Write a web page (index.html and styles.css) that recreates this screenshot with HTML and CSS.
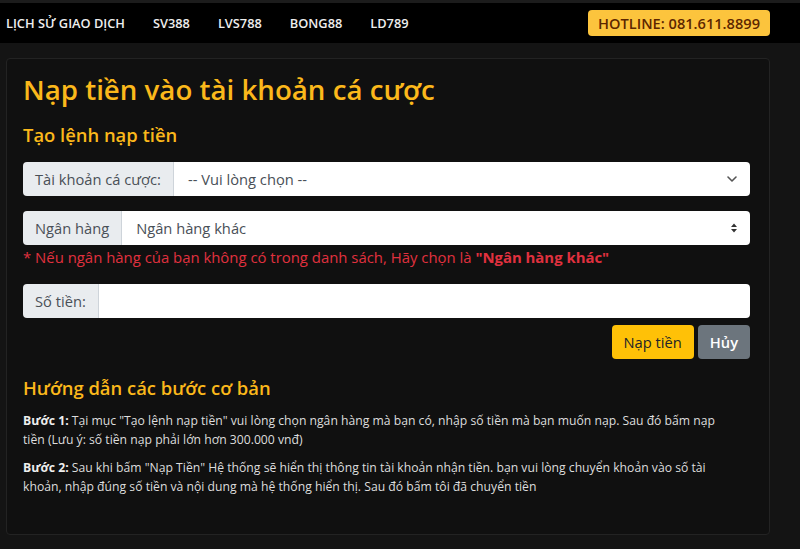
FILE: index.html
```html
<!DOCTYPE html>
<html lang="vi">
<head>
  <meta charset="UTF-8">
  <meta name="viewport" content="width=device-width, initial-scale=1.0">
  <title>Nạp tiền vào tài khoản cá cược</title>
  <link rel="stylesheet" href="styles.css">
</head>
<body>
  <nav class="topbar">
    <ul class="menu">
      <li>LỊCH SỬ GIAO DỊCH</li>
      <li>SV388</li>
      <li>LVS788</li>
      <li>BONG88</li>
      <li>LD789</li>
    </ul>
    <span class="hotline">HOTLINE: 081.611.8899</span>
  </nav>

  <main class="page">
    <section class="card">
      <h1>Nạp tiền vào tài khoản cá cược</h1>
      <h2>Tạo lệnh nạp tiền</h2>

      <div class="input-group">
        <span class="addon">Tài khoản cá cược:</span>
        <div class="field select">
          <span>-- Vui lòng chọn --</span>
          <svg width="12" height="8" viewBox="0 0 12 8"><path d="M2 2l4 4 4-4" fill="none" stroke="#555" stroke-width="1.6" stroke-linecap="round" stroke-linejoin="round"/></svg>
        </div>
      </div>

      <div class="input-group tight">
        <span class="addon">Ngân hàng</span>
        <div class="field select">
          <span>Ngân hàng khác</span>
          <svg width="8" height="12" viewBox="0 0 8 12"><path d="M4 1.5L7 5H1z M4 10.5L1 7h6z" fill="#333"/></svg>
        </div>
      </div>
      <p class="note">* Nếu ngân hàng của bạn không có trong danh sách, Hãy chọn là <strong>"Ngân hàng khác"</strong></p>

      <div class="input-group tight">
        <span class="addon">Số tiền:</span>
        <div class="field"></div>
      </div>
      <div class="actions">
        <button class="btn btn-warning">Nạp tiền</button>
        <button class="btn btn-secondary">Hủy</button>
      </div>

      <h2 class="guide-title">Hướng dẫn các bước cơ bản</h2>
      <p class="step"><b>Bước 1:</b> Tại mục "Tạo lệnh nạp tiền" vui lòng chọn ngân hàng mà bạn có, nhập số tiền mà bạn muốn nạp. Sau đó bấm nạp tiền (Lưu ý: số tiền nạp phải lớn hơn 300.000 vnđ)</p>
      <p class="step"><b>Bước 2:</b> Sau khi bấm "Nạp Tiền" Hệ thống sẽ hiển thị thông tin tài khoản nhận tiền. bạn vui lòng chuyển khoản vào số tài khoản, nhập đúng số tiền và nội dung mà hệ thống hiển thị. Sau đó bấm tôi đã chuyển tiền</p>
    </section>
  </main>
</body>
</html>
```

FILE: styles.css
```css
body { margin: 0; background-color: #141414; color: #ddd; font-family: "Open Sans", Arial, sans-serif; }

.topbar { display: flex; align-items: center; justify-content: space-between; height: 40px; background-color: #000; border-top: 3px solid #1c1c1c; padding: 0 30px 0 6px; }
.menu { display: flex; gap: 28px; margin: 0; padding: 0; list-style: none; }
.menu li { color: #eee; font-size: 12.8px; font-weight: 600; }
.hotline { background-color: #fcc43d; color: #5c2600; font-size: 14.6px; font-weight: 600; padding: 3px 10px; border-radius: 4px; line-height: 20px; }

.page { padding: 15px 30px 15px 6px; }
.card { background-color: #101010; border: 1px solid #232323; border-radius: 4px; padding: 12px 19px 29px 16px; }

h1 { color: #fbb81b; font-size: 27.7px; font-weight: 600; margin: 0 0 16px; line-height: 1.3; }
h2 { color: #fbb81b; font-size: 18.4px; font-weight: 600; margin: 0 0 15px; line-height: 1.3; }

.input-group { display: flex; height: 34px; border-radius: 4px; overflow: hidden; margin-bottom: 15px; }
.input-group.tight { margin-bottom: 2px; }
.addon { display: flex; align-items: center; padding: 0 12px; background-color: #e9ecef; color: #495057; font-size: 14.7px; border-right: 1px solid #ced4da; }
.field { flex: 1; display: flex; align-items: center; justify-content: space-between; background-color: #fff; padding: 0 12px 0 14px; color: #495057; font-size: 14.7px; }

.note { color: #e0313f; font-size: 14.9px; margin: 0 0 17px; }
.note strong { font-weight: 700; }

.actions { display: flex; justify-content: flex-end; gap: 4px; margin: 7px 0 17px; }
.btn { font-family: inherit; font-size: 14.7px; border: none; border-radius: 4px; height: 34px; padding: 0 12px; cursor: pointer; }
.btn-warning { background-color: #ffc107; color: #212529; }
.btn-secondary { background-color: #6c757d; color: #fff; font-weight: 600; }

.guide-title { margin-bottom: 11px; }
.step { font-size: 12.2px; line-height: 19px; margin: 0 0 9px; padding-right: 20px; color: #ddd; }
.step b { font-weight: 700; color: #eee; }
```
